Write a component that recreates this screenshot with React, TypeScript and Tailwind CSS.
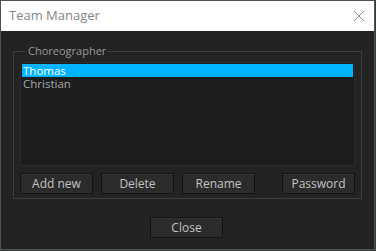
import React, { useState } from 'react';

const members = ['Thomas', 'Christian'];

const DlgButton: React.FC<{ label: string; className?: string }> = ({ label, className = '' }) => (
  <button
    className={`h-[21px] w-[73px] border border-[#131313] bg-[#2b2b2b] text-[12px] leading-none text-[#c4c4c4] shadow-[inset_0_1px_0_#353535] ${className}`}
  >
    {label}
  </button>
);

const App: React.FC = () => {
  const [selected, setSelected] = useState(0);

  return (
    <div className="w-[376px] h-[251px] bg-[#34413f] font-['Open_Sans','Noto_Sans',sans-serif]">
      <div className="w-[375px] h-[250px] border border-[#505050] flex flex-col">
        <div className="h-[30px] bg-white flex items-center justify-between pl-[8px] pr-[8px]">
          <span className="text-[13px] text-[#858585]">Team Manager</span>
          <svg width="12" height="12" viewBox="0 0 12 12" className="mr-[1px]">
            <path d="M1 1 L11 11 M11 1 L1 11" stroke="#8a8a8a" strokeWidth="1" fill="none" />
          </svg>
        </div>
        <div className="flex-1 bg-[#232323] flex flex-col pt-[13px] px-[12px]">
          <fieldset className="h-[155px] border border-[#3d3d3d] px-[6px] pb-[4px]">
            <legend className="ml-[7px] px-[1px] text-[11px] leading-[14px] text-[#9a9a9a]">Choreographer</legend>
            <div className="mt-[4px] h-[104px] border border-[#2c2c2c] bg-[#1c1c1c] p-[1px]">
              {members.map((m, i) => (
                <div
                  key={m}
                  onClick={() => setSelected(i)}
                  className={`h-[13px] pl-[1px] text-[11.5px] leading-[13px] ${
                    i === selected ? 'bg-[#00b4ff] text-white' : 'text-[#a8a8a8]'
                  }`}
                >
                  {m}
                </div>
              ))}
            </div>
            <div className="mt-[7px] flex">
              <DlgButton label="Add new" />
              <DlgButton label="Delete" className="ml-[8px]" />
              <DlgButton label="Rename" className="ml-[8px]" />
              <DlgButton label="Password" className="ml-auto" />
            </div>
          </fieldset>
          <div className="mt-[18px] flex justify-center">
            <DlgButton label="Close" className="ml-[-2px]" />
          </div>
        </div>
      </div>
    </div>
  );
};

export default App;
